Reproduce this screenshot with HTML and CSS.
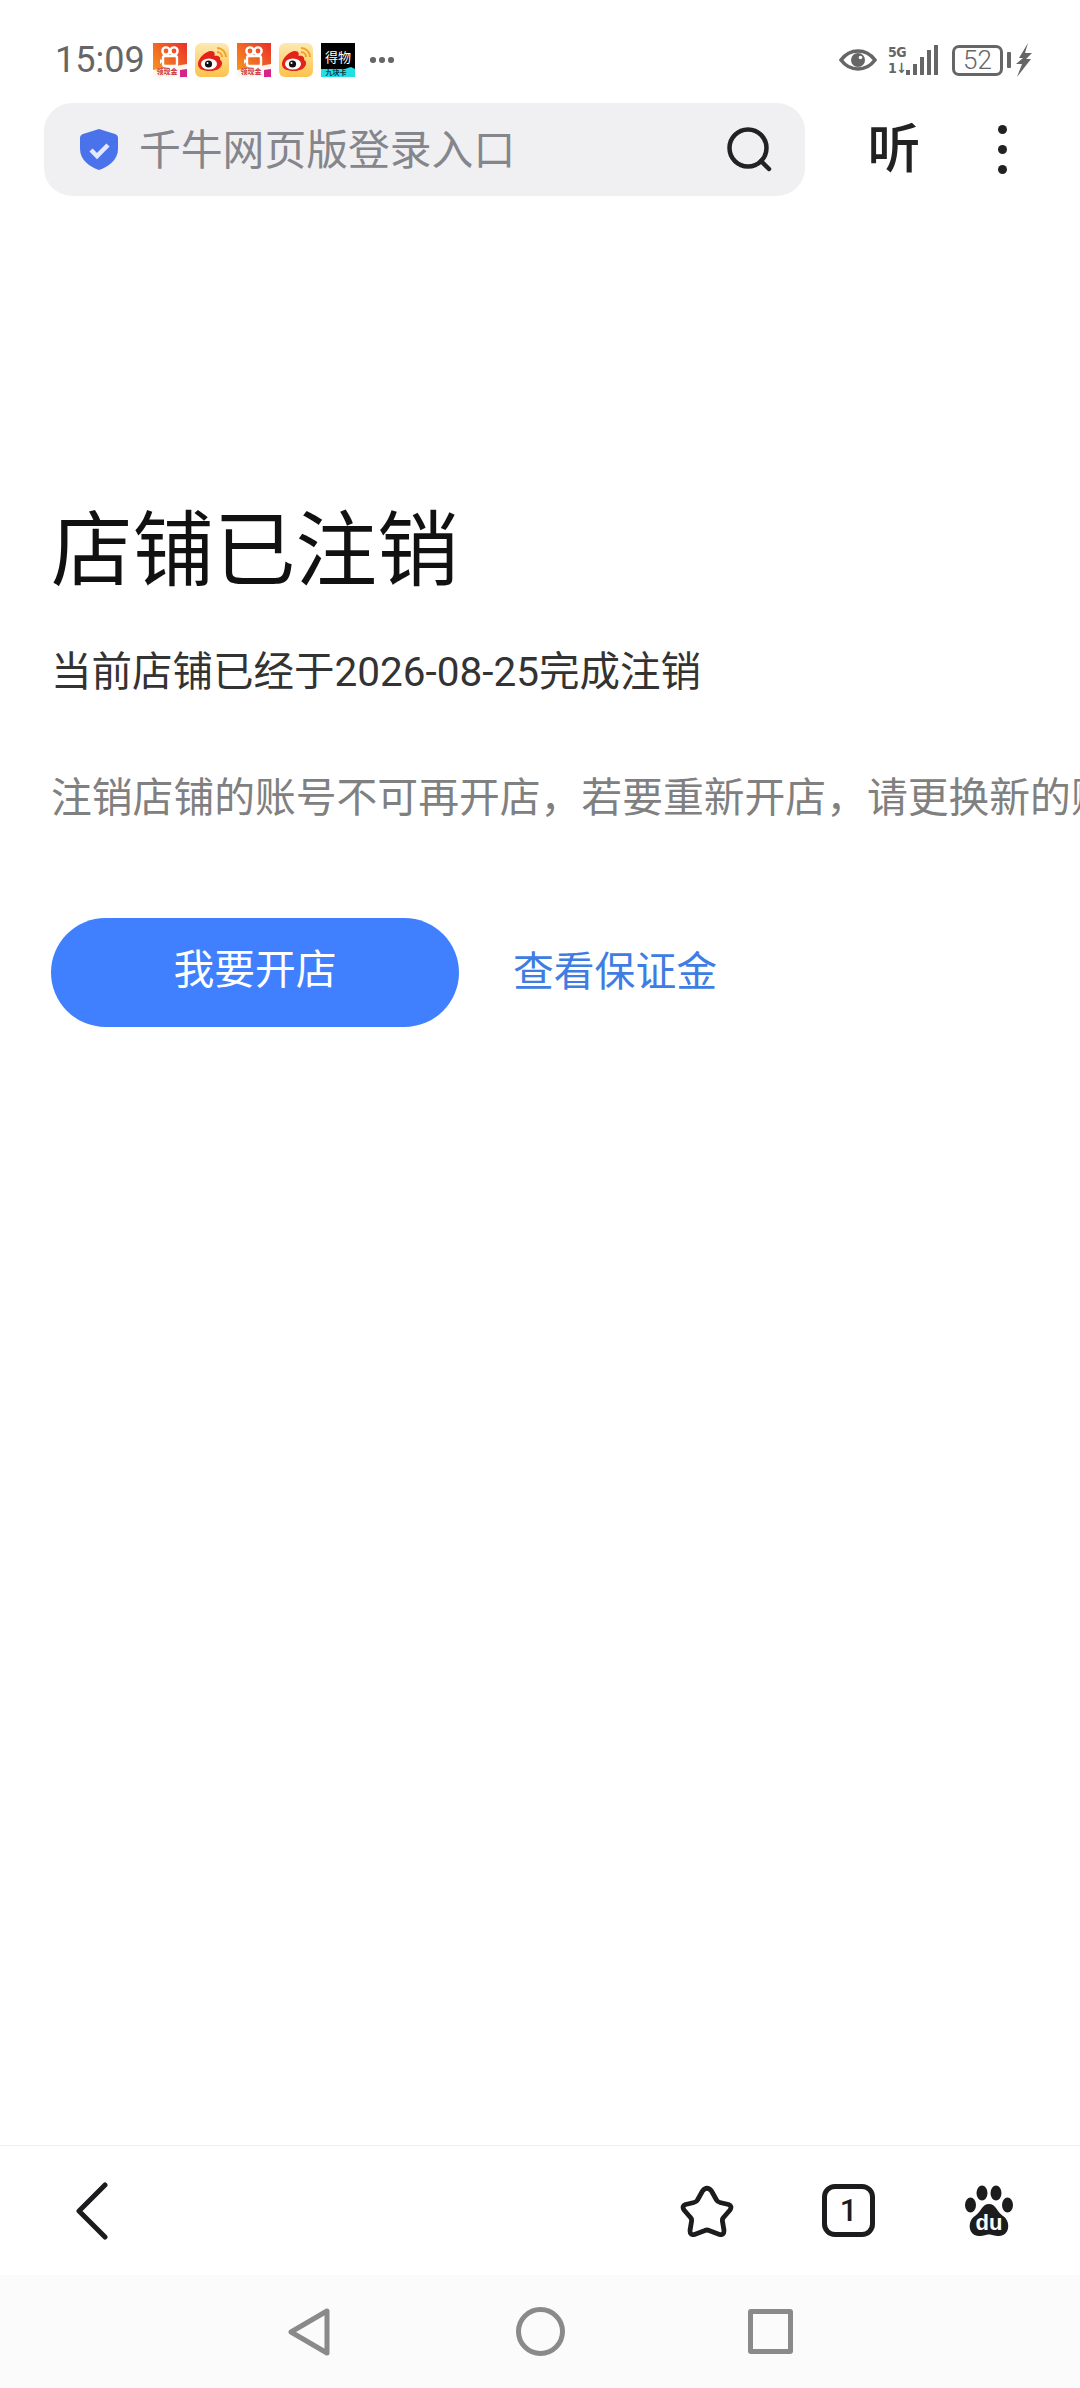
FILE: index.html
```html
<!DOCTYPE html>
<html lang="zh-CN">
<head>
<meta charset="utf-8">
<title>店铺已注销</title>
<link rel="stylesheet" href="styles.css">
</head>
<body>
<div class="page">
  <header class="statusbar">
    <div class="status-left">
      <span class="time">15:09</span>
      <div class="notifs">
        <svg class="app" viewBox="0 0 34 34"><defs><linearGradient id="ks" x1="0" y1="1" x2="1" y2="0"><stop offset="0" stop-color="#f7a11e"/><stop offset="1" stop-color="#ea2f2a"/></linearGradient></defs><rect width="34" height="34" fill="url(#ks)"/><path d="M0 27 L34 21 V34 H0Z" fill="#fff6ee"/><path d="M27 27 L34 26 V34 H27Z" fill="#d8238a"/><circle cx="13" cy="8" r="3.6" fill="none" stroke="#fff" stroke-width="2.4"/><circle cx="21" cy="8" r="3.6" fill="none" stroke="#fff" stroke-width="2.4"/><rect x="10" y="13" width="14" height="10" rx="2" fill="none" stroke="#fff" stroke-width="2.4"/><path d="M7 16 L10 18 L7 21Z" fill="#fff"/><text class="tiny tiny-red" x="14" y="31">领现金</text></svg>
        <svg class="app" viewBox="0 0 34 34"><use href="#weibo"/></svg>
        <svg class="app" viewBox="0 0 34 34"><rect width="34" height="34" fill="url(#ks)"/><path d="M0 27 L34 21 V34 H0Z" fill="#fff6ee"/><path d="M27 27 L34 26 V34 H27Z" fill="#d8238a"/><circle cx="13" cy="8" r="3.6" fill="none" stroke="#fff" stroke-width="2.4"/><circle cx="21" cy="8" r="3.6" fill="none" stroke="#fff" stroke-width="2.4"/><rect x="10" y="13" width="14" height="10" rx="2" fill="none" stroke="#fff" stroke-width="2.4"/><path d="M7 16 L10 18 L7 21Z" fill="#fff"/><text class="tiny tiny-red" x="14" y="31">领现金</text></svg>
        <svg class="app" viewBox="0 0 34 34"><defs><linearGradient id="wb" x1="0" y1="0" x2="0" y2="1"><stop offset="0" stop-color="#fde9b4"/><stop offset="1" stop-color="#fcc24a"/></linearGradient><g id="weibo"><rect width="34" height="34" rx="6" fill="url(#wb)"/><path d="M3 21 C3 15 11 8 16 8 C20 8 20 11 19.500 13 C23 12 26 14 25 17 C29 18 28 28 15 28 C8 28 3 26 3 21Z" fill="#e2231a"/><ellipse cx="14" cy="21" rx="8" ry="5.500" fill="#fff"/><circle cx="13.500" cy="21" r="3.600" fill="#111"/><circle cx="12.500" cy="20" r="1" fill="#fff"/><path d="M22 5 A9 9 0 0 1 31 14" fill="none" stroke="#f3a01e" stroke-width="2"/><path d="M22 9 A5 5 0 0 1 27 14" fill="none" stroke="#f3a01e" stroke-width="2"/></g></defs><use href="#weibo"/></svg>
        <svg class="app" viewBox="0 0 34 34"><rect width="34" height="34" fill="#000"/><path d="M0 26 H24 L30 24 L34 26 V34 H0Z" fill="#22dfe6"/><text class="dewu" x="17" y="19">得物</text><text class="tiny tiny-dark" x="15" y="32">九块卡</text></svg>
      </div>
      <div class="more"><i></i><i></i><i></i></div>
    </div>
    <div class="status-right">
      <svg class="eye" viewBox="0 0 38 22"><path d="M2 11 C8 3 14 2 19 2 C24 2 30 3 36 11 C30 19 24 20 19 20 C14 20 8 19 2 11Z" fill="none" stroke="#666" stroke-width="3.600"/><circle cx="19" cy="11" r="7" fill="#666"/><circle cx="21.500" cy="8.500" r="1.800" fill="#fff"/></svg>
      <div class="net">
        <div class="net-labels"><span>5G</span><span>1↓</span></div>
        <svg class="bars" viewBox="0 0 32 30"><rect x="0" y="25" width="4" height="5"/><rect x="7" y="19" width="4" height="11"/><rect x="14" y="12" width="4" height="18"/><rect x="21" y="5" width="4" height="25"/><rect x="28" y="0" width="4" height="30"/></svg>
      </div>
      <div class="battery-wrap">
        <div class="battery">52</div>
        <span class="nub"></span>
      </div>
      <svg class="bolt" viewBox="0 0 16 34"><path d="M12 0 L3 15 L7 15 L0 21 L6 21 L1 34 L15 16 L10 16 L16 10 L9 10Z" fill="#666"/></svg>
    </div>
  </header>

  <div class="urlrow">
    <div class="urlbar">
      <svg class="shield" viewBox="0 0 38 41"><path d="M19 0 L35 5 Q38 6 38 9 V20 C38 31 28 38 19 41 C10 38 0 31 0 20 V9 Q0 6 3 5Z" fill="#4a72ea"/><path d="M11 21 L17 27 L28 16" fill="none" stroke="#e3e9fc" stroke-width="4.500"/></svg>
      <span class="urltext">千牛网页版登录入口</span>
      <svg class="search" viewBox="0 0 46 46"><circle cx="21" cy="21" r="18.500" fill="none" stroke="#222" stroke-width="4.500"/><path d="M34 34 L42 42" stroke="#222" stroke-width="4.500" stroke-linecap="round"/></svg>
    </div>
    <span class="listen">听</span>
    <div class="menu"><i></i><i></i><i></i></div>
  </div>

  <main class="content">
    <h1 class="title">店铺已注销</h1>
    <p class="sub">当前店铺已经于2026-08-25完成注销</p>
    <p class="note">注销店铺的账号不可再开店，若要重新开店，请更换新的账号</p>
    <div class="actions">
      <a class="btn">我要开店</a>
      <a class="link">查看保证金</a>
    </div>
  </main>

  <nav class="toolbar">
    <svg class="back" viewBox="0 0 32 58"><path d="M29 3 L3 29 L29 55" fill="none" stroke="#1c1c1e" stroke-width="5" stroke-linecap="round" stroke-linejoin="round"/></svg>
    <svg class="star" viewBox="0 0 54 52"><path d="M22.500 6 Q27 .5 31.500 6 L36.500 15 Q37.500 17 40 17.500 L48.500 19.500 Q52.500 21 50 25 L43.500 32.500 Q42 34 42.500 36.500 L44 45.500 Q44 50.500 39.500 49.500 L29 45.500 Q27 44.500 25 45.500 L14.500 49.500 Q10 50.500 10 45.500 L11.500 36.500 Q12 34 10.500 32.500 L4 25 Q1.500 21 5.500 19.500 L14 17.500 Q16.500 17 17.500 15Z" fill="none" stroke="#1c1c1e" stroke-width="4.800" stroke-linejoin="round"/></svg>
    <div class="tabs">1</div>
    <svg class="paw" viewBox="0 0 48 52"><ellipse cx="17" cy="8" rx="5.500" ry="7.500" fill="#1c1c1e"/><ellipse cx="31" cy="8" rx="5.500" ry="7.500" fill="#1c1c1e"/><ellipse cx="5.500" cy="20" rx="5.500" ry="7.500" fill="#1c1c1e"/><ellipse cx="42.500" cy="20" rx="5.500" ry="7.500" fill="#1c1c1e"/><path d="M24 19 C31 19 32 27 38 31 C46 36 45 51 34 51 C29 51 27 49.500 24 49.500 C21 49.500 19 51 14 51 C3 51 2 36 10 31 C16 27 17 19 24 19Z" fill="#1c1c1e"/><text class="du" x="24" y="45">du</text></svg>
  </nav>

  <nav class="navbar">
    <svg class="nav-back" viewBox="0 0 42 48"><path d="M39 3 V45 L3 24Z" fill="none" stroke="#8a8a8a" stroke-width="5" stroke-linejoin="round"/></svg>
    <svg class="nav-home" viewBox="0 0 49 49"><circle cx="24.500" cy="24.500" r="22" fill="none" stroke="#8a8a8a" stroke-width="5"/></svg>
    <div class="nav-recent"></div>
  </nav>
</div>
</body>
</html>
```

FILE: styles.css
```css
* { box-sizing: border-box; }
html, body { margin: 0; padding: 0; background: #fff; }
body { font-family: Roboto, "Noto Sans CJK SC", sans-serif; }

.page {
  width: 1080px;
  height: 2388px;
  display: flex;
  flex-direction: column;
  overflow: hidden;
  background: #fff;
}

/* status bar */
.statusbar {
  height: 103px;
  padding: 20px 48px 3px 55px;
  display: flex;
  align-items: center;
  justify-content: space-between;
  flex: none;
}
.status-left, .status-right { display: flex; align-items: center; }
.time { font-size: 36px; color: #666; width: 98px; line-height: 40px; }
.notifs { display: flex; gap: 8px; }
.app { width: 34px; height: 34px; display: block; }
.tiny { font-size: 7px; font-family: "Noto Sans CJK SC", sans-serif; text-anchor: middle; font-weight: 700; }
.tiny-red { fill: #c8323a; }
.tiny-dark { fill: #0c3b40; }
.dewu { font-size: 13px; fill: #fff; text-anchor: middle; font-family: "Noto Sans CJK SC", sans-serif; }
.more { display: flex; gap: 3.500px; margin-left: 15px; }
.more i { width: 5.500px; height: 5.500px; border-radius: 50%; background: #666; display: block; }

.eye { width: 38px; height: 22px; display: block; margin-right: 11px; }
.net { display: flex; align-items: flex-end; height: 30px; margin-right: 14px; }
.net-labels {
  display: flex;
  flex-direction: column;
  justify-content: space-between;
  height: 30px;
  width: 18px;
  font-family: "DejaVu Sans Condensed", "DejaVu Sans", sans-serif;
  font-size: 14px;
  line-height: 14px;
  font-weight: 700;
  color: #666;
  letter-spacing: -0.500px;
}
.bars { width: 32px; height: 30px; fill: #666; display: block; }
.battery-wrap { display: flex; align-items: center; gap: 4px; margin-right: 5px; }
.battery {
  width: 51px;
  height: 31px;
  border: 3px solid #666;
  border-radius: 7px;
  color: #666;
  font-size: 26px;
  font-weight: 300;
  line-height: 25px;
  text-align: center;
}
.nub { width: 4px; height: 16px; background: #666; border-radius: 1px; display: block; }
.bolt { width: 16px; height: 34px; display: block; }

/* url row */
.urlrow { display: flex; align-items: center; height: 93px; padding-left: 44px; flex: none; }
.urlbar {
  width: 761px;
  height: 93px;
  border-radius: 28px;
  background: #f0f0f3;
  display: flex;
  align-items: center;
  padding: 0 32px 0 36px;
}
.shield { width: 38px; height: 41px; margin-right: 21px; display: block; flex: none; }
.urltext { flex: 1; font-size: 41.800px; line-height: 56px; color: #85868c; white-space: nowrap; padding-top: 2px; }
.search { width: 46px; height: 46px; display: block; flex: none; }
.listen { font-size: 53px; line-height: 60px; color: #222; margin-left: 61px; width: 56px; text-align: center; font-weight: 500; }
.menu { display: flex; flex-direction: column; gap: 11px; margin-left: 76px; }
.menu i { display: block; width: 9px; height: 9px; border-radius: 50%; background: #222; }

/* content */
.content { flex: 1; min-height: 0; padding: 305px 0 0 51px; overflow: hidden; }
.title { margin: 0; font-size: 81.500px; line-height: 100px; font-weight: 400; color: #111; }
.sub { margin: 44px 0 0; font-size: 40.500px; line-height: 54px; color: #333; white-space: nowrap; }
.note { margin: 72px 0 0; font-size: 40.800px; line-height: 54px; color: #808080; white-space: nowrap; }
.actions { display: flex; align-items: center; margin-top: 93px; }
.btn {
  width: 408px;
  height: 109px;
  border-radius: 55px;
  background: #4080ff;
  color: #fff;
  font-size: 40.800px;
  line-height: 54px;
  padding-bottom: 6px;
  display: flex;
  align-items: center;
  justify-content: center;
}
.link { margin-left: 54px; font-size: 40.800px; line-height: 54px; color: #3f7de3; padding-bottom: 2px; }

/* toolbar */
.toolbar {
  height: 130px;
  flex: none;
  border-top: 1px solid #eeeeee;
  display: flex;
  align-items: center;
  padding: 0 67px 0 76px;
  gap: 88px;
}
.back { width: 32px; height: 58px; display: block; margin-right: auto; }
.star { width: 54px; height: 52px; display: block; }
.tabs {
  width: 53px;
  height: 53px;
  border: 5px solid #1c1c1e;
  border-radius: 13px;
  font-size: 31px;
  font-weight: 500;
  line-height: 43px;
  text-align: center;
  color: #1c1c1e;
}
.paw { width: 48px; height: 52px; display: block; margin-left: 2px; }
.du { font-size: 22px; font-weight: 700; fill: #fff; text-anchor: middle; font-family: "Liberation Sans", sans-serif; }

/* navigation bar */
.navbar {
  height: 113px;
  flex: none;
  background: #fbfbfb;
  display: flex;
  align-items: center;
  padding-left: 288px;
}
.nav-back { width: 42px; height: 48px; display: block; }
.nav-home { width: 49px; height: 49px; display: block; margin: 0 183px 0 186px; }
.nav-recent { width: 45px; height: 45px; border: 5px solid #8a8a8a; border-radius: 3px; }
```
